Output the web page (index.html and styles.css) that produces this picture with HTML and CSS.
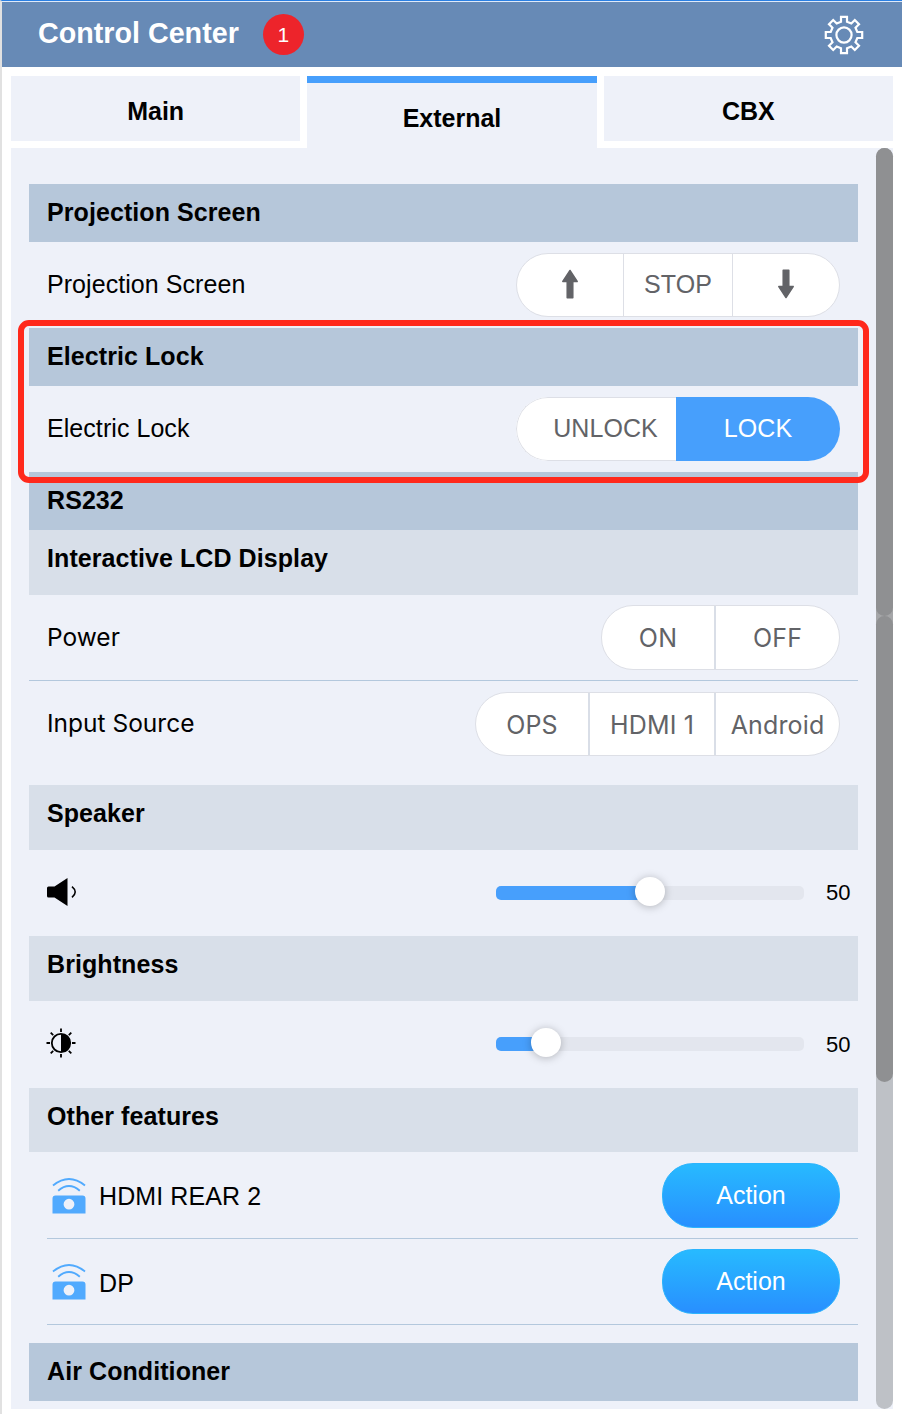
FILE: index.html
```html
<!DOCTYPE html>
<html lang="en">
<head>
<meta charset="utf-8">
<title>Control Center</title>
<link rel="stylesheet" href="styles.css">
</head>
<body>
<div class="window">
  <header class="header">
    <h1 class="title">Control Center</h1>
    <span class="badge">1</span>
    <svg class="gear" width="40" height="40" viewBox="-20 -20 40 40" fill="none" stroke="#fff" stroke-width="2.2">
      <path d="M-3-18.2H3V-13.3L7.3-11.5L10.8-15L15-10.8L11.5-7.3L13.3-3H18.2V3H13.3L11.5 7.3L15 10.8L10.8 15L7.3 11.5L3 13.3V18.2H-3V13.3L-7.3 11.5L-10.8 15L-15 10.8L-11.5 7.3L-13.3 3H-18.2V-3H-13.3L-11.5-7.3L-15-10.8L-10.8-15L-7.3-11.5L-3-13.3Z"/>
      <circle r="7.6"/>
    </svg>
  </header>
  <nav class="tabs">
    <div class="tab">Main</div>
    <div class="tab active">External</div>
    <div class="tab">CBX</div>
  </nav>
  <main class="panel">
    <div class="content">
      <h2 class="bar">Projection Screen</h2>
      <div class="row control">
        <span>Projection Screen</span>
        <div class="group screen">
          <button class="seg arrow"><svg width="18" height="30" viewBox="0 0 18 30"><path d="M9 1.5L16.2 12.5H11.8V28.7H6.2V12.5H1.8Z"/></svg></button>
          <button class="seg">STOP</button>
          <button class="seg arrow"><svg width="18" height="30" viewBox="0 0 18 30"><path d="M9 28.5L16.2 17.5H11.8V1.3H6.2V17.5H1.8Z"/></svg></button>
        </div>
      </div>
      <section class="highlighted">
        <h2 class="bar">Electric Lock</h2>
        <div class="row control">
          <span>Electric Lock</span>
          <div class="group lock">
            <button class="seg unlock">UNLOCK</button>
            <button class="seg on">LOCK</button>
          </div>
        </div>
        <div class="outline"></div>
      </section>
      <h2 class="bar">RS232</h2>
      <h3 class="sub">Interactive LCD Display</h3>
      <div class="row power">
        <span class="alt">Power</span>
        <div class="group wide">
          <button class="seg w113">ON</button>
          <button class="seg w125">OFF</button>
        </div>
      </div>
      <div class="row source">
        <span class="alt">Input Source</span>
        <div class="group wide">
          <button class="seg w113">OPS</button>
          <button class="seg w126">HDMI 1</button>
          <button class="seg w125">Android</button>
        </div>
      </div>
      <h3 class="sub">Speaker</h3>
      <div class="row">
        <svg class="speaker" width="30" height="30" viewBox="0 0 30 30"><path d="M1.5 9.5H7.5L20.5 1V29L7.5 20.5H1.5Q0 20.5 0 19V11Q0 9.5 1.5 9.5Z"/><path d="M25 9.7Q31.4 15 25 20.3" fill="none" stroke="#000" stroke-width="1.6"/></svg>
        <div class="level"><div class="track"><div class="fill" style="width:50%"><i class="knob"></i></div></div><span class="value">50</span></div>
      </div>
      <h3 class="sub">Brightness</h3>
      <div class="row tall">
        <svg class="sun" width="30" height="30" viewBox="-15 -15 30 30"><g stroke="#000" stroke-width="1.8" fill="none"><circle r="9.2"/><path d="M0-14.5V-11M0 11V14.5M-14.5 0H-11M11 0H14.5M-10.3-10.3L-7.8-7.8M10.3-10.3L7.8-7.8M-10.3 10.3L-7.8 7.8M10.3 10.3L7.8 7.8"/></g><path d="M0-9A9 9 0 0 1 0 9Z"/></svg>
        <div class="level"><div class="track"><div class="fill" style="width:16.2%"><i class="knob"></i></div></div><span class="value low">50</span></div>
      </div>
      <h3 class="sub short">Other features</h3>
      <div class="row feature">
        <svg class="remote" width="34" height="36" viewBox="0 0 34 36"><path d="M1 7.5Q17-5.5 33 7.5M6.2 12.7Q17 3.5 27.8 12.7" fill="none" stroke="#51aafe" stroke-width="1.9"/><path fill="#51aafe" fill-rule="evenodd" d="M3.5 17.5H30.5Q33.5 17.5 33.5 20.5V35.5H.5V20.5Q.5 17.5 3.5 17.5ZM17 20.8A5.4 5.4 0 1 0 17 31.6A5.4 5.4 0 1 0 17 20.8Z"/></svg>
        <span class="name">HDMI REAR 2</span>
        <button class="action">Action</button>
      </div>
      <div class="row feature second">
        <svg class="remote" width="34" height="36" viewBox="0 0 34 36"><path d="M1 7.5Q17-5.5 33 7.5M6.2 12.7Q17 3.5 27.8 12.7" fill="none" stroke="#51aafe" stroke-width="1.9"/><path fill="#51aafe" fill-rule="evenodd" d="M3.5 17.5H30.5Q33.5 17.5 33.5 20.5V35.5H.5V20.5Q.5 17.5 3.5 17.5ZM17 20.8A5.4 5.4 0 1 0 17 31.6A5.4 5.4 0 1 0 17 20.8Z"/></svg>
        <span class="name">DP</span>
        <button class="action">Action</button>
      </div>
      <h2 class="bar last">Air Conditioner</h2>
    </div>
    <div class="scrollbar"><div class="thumb upper"></div><div class="thumb lower"></div></div>
  </main>
</div>
</body>
</html>
```
FILE: styles.css
```css
* { box-sizing: border-box; }
body { margin: 0; background: #fff; color: #000; font: 25px/30px "Liberation Sans", Arial, sans-serif; }
h1, h2, h3 { margin: 0; }
svg { flex: none; display: block; }
button { font: inherit; letter-spacing: inherit; margin: 0; border: 0; padding: 0; background: none; color: inherit; }

.window { height: 1414px; border-top: 1px solid #2a80e4; border-left: 2px solid #e1e1e1; overflow: hidden; }
.header { display: flex; align-items: center; height: 66px; padding: 0 38px 0 36px; border-top: 1px solid #dfeafa; background: #678ab6; color: #fff; }
.title { font-size: 28.7px; line-height: 34px; padding-bottom: 3px; }
.badge { display: grid; place-items: center; width: 41px; height: 41px; margin-left: 24px; border-radius: 50%; background: #ed242b; font-size: 21px; }
.gear { margin-left: auto; }

.tabs { display: flex; gap: 7px; height: 81px; padding: 9px 9px 0; }
.tab { flex: 1; height: 65px; display: grid; place-items: center; padding-top: 5px; background: #eef1f9; font-weight: bold; }
.active { height: 72px; border-top: 7px solid #479ffc; }

.panel { display: flex; justify-content: space-between; height: 1261px; margin: 0 9px; padding-left: 18px; background: #eef1f9; }
.content { width: 829px; padding-top: 36px; }
.bar { height: 58px; padding: 13px 18px; background: #b6c7da; font-size: 25px; line-height: 30px; letter-spacing: .08px; }
.sub { height: 65px; padding: 13px 18px; background: #d8dfe9; font-size: 25px; line-height: 30px; letter-spacing: .08px; }
.short { height: 64px; }
.last { margin-top: 18px; }
.row { display: flex; align-items: center; justify-content: space-between; height: 86px; padding: 0 18px; }
.control { letter-spacing: .06px; }
.control > span { padding-bottom: 2px; }
.power { border-bottom: 1px solid #b3c8dd; }
.source { height: 104px; padding-bottom: 18px; }
.tall { height: 87px; padding-bottom: 2px; }
.alt { font-family: Inter, sans-serif; font-size: 24.5px; font-weight: 400; letter-spacing: 0; padding-bottom: 1px; }
.source .alt { padding-bottom: 3px; }

.group { display: flex; height: 64px; border: 1px solid #dddfe6; border-radius: 32px; overflow: hidden; background: #fff; color: #626367; }
.seg { display: grid; place-items: center; padding-bottom: 3px; }
.seg svg { fill: #626367; stroke: #626367; stroke-width: 1.5; stroke-linejoin: round; }
.seg + .seg { border-left: 1px solid #dddfe6; }
.screen { width: 324px; }
.screen .seg { width: 109px; }
.screen .arrow { padding: 0 0 2px; }
.screen .arrow:first-child { width: 106px; }
.screen .arrow:last-child { width: 107px; }
.lock { width: 324px; border: 0; }
.unlock { width: 160px; padding-left: 18px; border: 1px solid #dddfe6; border-right: 0; border-radius: 32px 0 0 32px; }
.seg.on { width: 164px; border-left: 0; background: #479ffc; color: #fff; }
.wide { font-family: Inter, sans-serif; letter-spacing: .15px; }
.wide .seg { padding: 1px 0 0; }
.power .group { height: 65px; }
.source .seg { padding-top: 2px; }
.wide .seg + .seg { border-left: 2px solid #d9dee7; }
.w113 { width: 112px; }
.w125 { width: 125px; }
.w126 { width: 126px; }

.highlighted { position: relative; }
.outline { position: absolute; top: -8px; left: -11px; right: -11px; height: 163px; border: 6px solid #ff291c; border-radius: 11px; }

.level { display: flex; align-items: center; width: 354px; margin-right: -10px; gap: 22px; }
.speaker { margin-top: -2px; }
.sun { margin: -1px 0 0 -1px; }
.track { flex: none; width: 308px; height: 14px; border-radius: 5px; background: #e3e6ee; }
.fill { position: relative; height: 14px; border-radius: 5px 0 0 5px; background: #479ffc; }
.knob { position: absolute; right: -15px; top: -9px; width: 30px; height: 29px; border-radius: 50%; background: #fff; box-shadow: 0 1px 8px rgba(0, 0, 0, .25); }
.value { font-size: 22px; }
.low { padding-top: 2px; }

.feature { margin-left: 18px; padding: 1px 18px 0 5px; border-bottom: 1px solid #b3c8dd; height: 87px; }
.second { height: 86px; padding-top: 0; }
.second .name { padding-top: 3px; }
.name { margin-left: 13px; padding-top: 1px; letter-spacing: .1px; }
.action { width: 178px; height: 65px; margin-left: auto; padding-bottom: 2px; border: 1px solid #2cb4fd; border-radius: 31px; background: linear-gradient(#27baff, #288fff); color: #fff; }

.scrollbar { width: 17px; border-radius: 9px; background: linear-gradient(#a5a6a8 600px, #bec1c6 600px); }
.thumb { width: 17px; border-radius: 9px; background: #8f9092; }
.upper { height: 468px; }
.lower { height: 466px; }
```
